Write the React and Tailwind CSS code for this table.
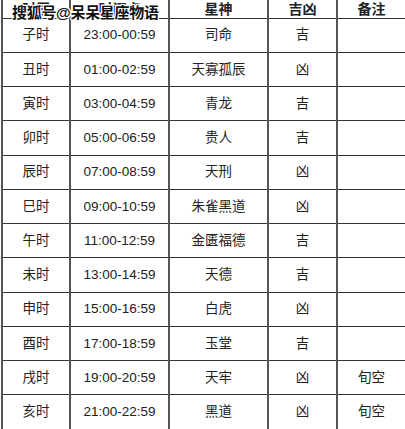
import React from 'react'

const rows = [
  ['子时', '23:00-00:59', '司命', '吉', ''],
  ['丑时', '01:00-02:59', '天寡孤辰', '凶', ''],
  ['寅时', '03:00-04:59', '青龙', '吉', ''],
  ['卯时', '05:00-06:59', '贵人', '吉', ''],
  ['辰时', '07:00-08:59', '天刑', '凶', ''],
  ['巳时', '09:00-10:59', '朱雀黑道', '凶', ''],
  ['午时', '11:00-12:59', '金匮福德', '吉', ''],
  ['未时', '13:00-14:59', '天德', '吉', ''],
  ['申时', '15:00-16:59', '白虎', '凶', ''],
  ['酉时', '17:00-18:59', '玉堂', '吉', ''],
  ['戌时', '19:00-20:59', '天牢', '凶', '旬空'],
  ['亥时', '21:00-22:59', '黑道', '凶', '旬空'],
]

const headers = ['时辰', '时间点', '星神', '吉凶', '备注']

export default function App() {
  return (
    <div
      className="relative w-[405px] h-[429px] overflow-hidden bg-white text-[#222]"
      style={{ fontFamily: '"Liberation Sans", "Noto Sans CJK SC", sans-serif' }}
    >
      <table className="table-fixed border-collapse w-[404px] ml-px text-[13.5px] text-center">
        <colgroup>
          <col className="w-[68px]" />
          <col className="w-[99px]" />
          <col className="w-[99px]" />
          <col className="w-[69px]" />
          <col className="w-[69px]" />
        </colgroup>
        <thead>
          <tr className="h-[18px]">
            {headers.map((h) => (
              <th
                key={h}
                className="border-x-2 border-b border-x-[#555] border-b-[#333] p-0 leading-none font-bold text-[14px] align-middle"
              >
                {h}
              </th>
            ))}
          </tr>
        </thead>
        <tbody>
          {rows.map((r) => (
            <tr key={r[0]} className="h-[34.25px]">
              {r.map((c, i) => (
                <td
                  key={i}
                  className="border-x-2 border-y border-x-[#555] border-y-[#333] p-0 leading-none align-middle"
                >
                  {c}
                </td>
              ))}
            </tr>
          ))}
        </tbody>
      </table>

      {/* watermark */}
      <div
        className="absolute left-[12px] top-[4px] text-[15px] font-bold leading-[18px] text-[#111] tracking-[-0.3px]"
        style={{ textShadow: '1px 0 #fff, -1px 0 #fff, 0 1px #fff, 0 -1px #fff, 1px 1px #fff, -1px -1px #fff, 1px -1px #fff, -1px 1px #fff' }}
      >
        搜狐号@呆呆星座物语
      </div>
    </div>
  )
}
